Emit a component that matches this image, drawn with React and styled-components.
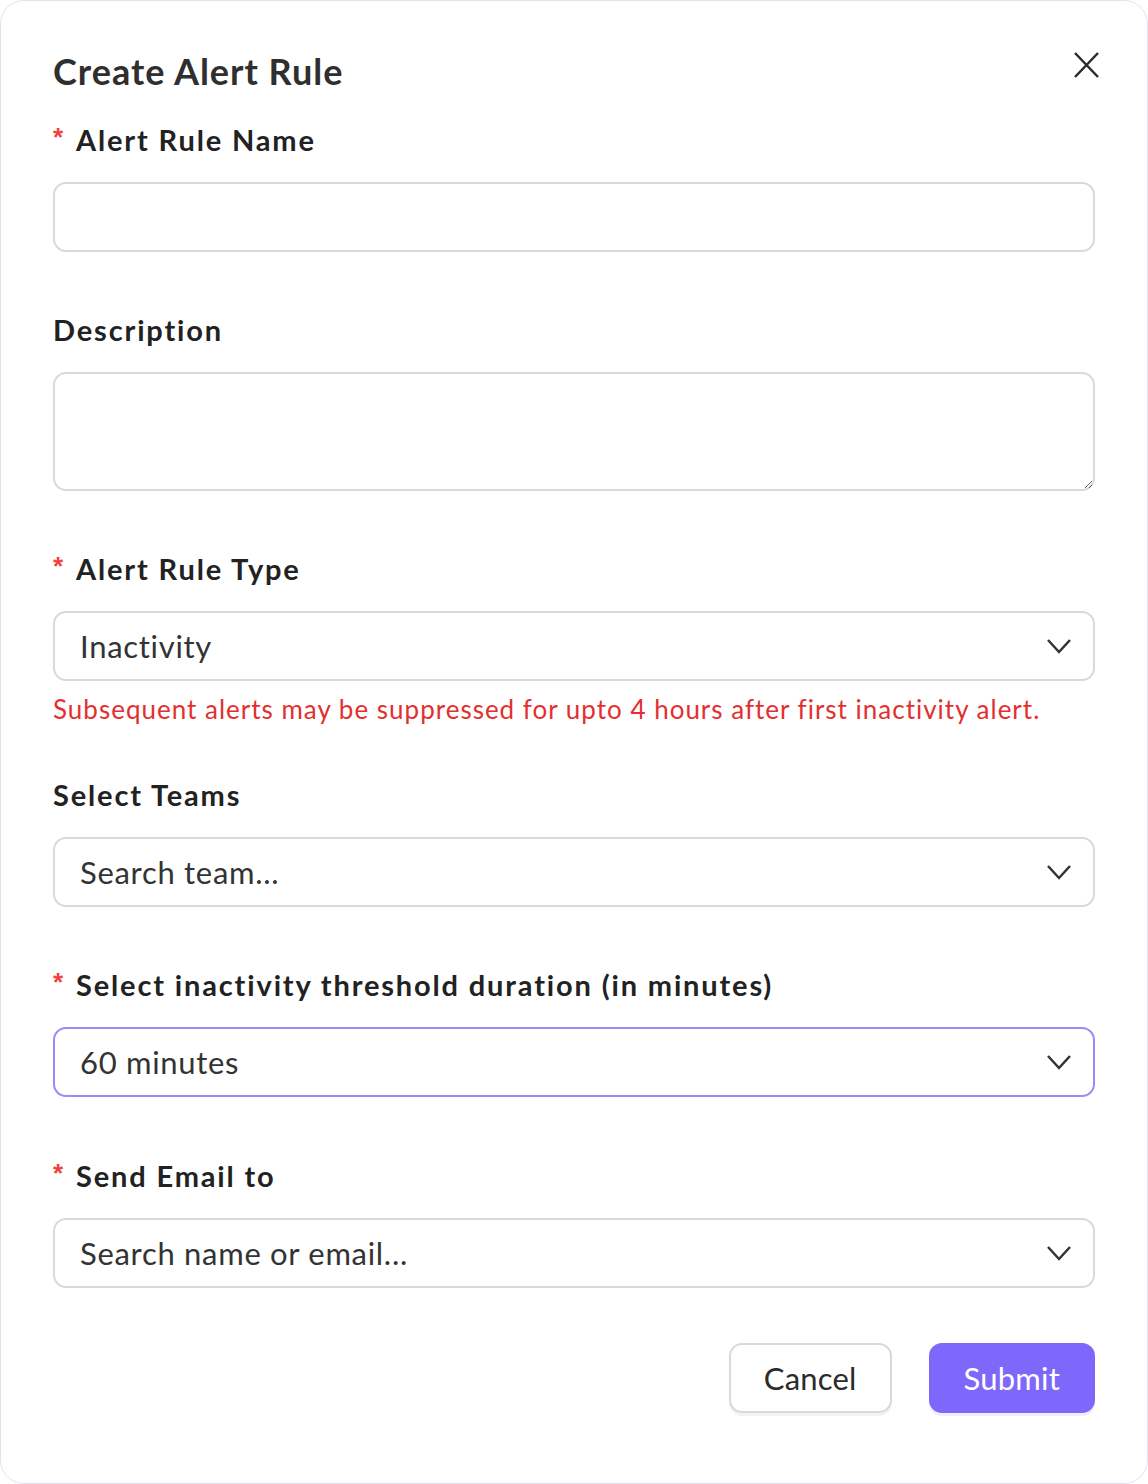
import React from "react";
import styled, { createGlobalStyle } from "styled-components";

const GlobalStyle = createGlobalStyle`
  html, body {
    margin: 0;
    padding: 0;
    background: #ffffff;
    font-family: Lato, "Open Sans", sans-serif;
  }
  * {
    box-sizing: border-box;
  }
`;

const Card = styled.div`
  width: 1148px;
  height: 1484px;
  border: 1px solid #e4e2f2;
  border-radius: 24px;
  background: #fff;
  padding: 46px 52px 0 52px;
  display: flex;
  flex-direction: column;
`;

const Header = styled.div`
  display: flex;
  justify-content: space-between;
  align-items: flex-start;
`;

const Title = styled.h2`
  margin: 0;
  font-size: 36px;
  line-height: 48px;
  font-weight: 700;
  color: #2f2f2f;
  letter-spacing: 1px;
`;

const CloseButton = styled.button`
  border: none;
  background: none;
  padding: 0;
  margin: 1px -8px 0 0;
  width: 34px;
  height: 34px;
  display: flex;
  align-items: center;
  justify-content: center;
  cursor: pointer;
  color: #2b2b2b;
`;

const Field = styled.div`
  display: flex;
  flex-direction: column;
  margin-top: ${props => props.top || 58}px;
`;

const Label = styled.label`
  display: flex;
  align-items: center;
  font-size: 29px;
  line-height: 40px;
  font-weight: 700;
  color: #222;
  letter-spacing: 1.85px;
  margin-bottom: 22px;
`;

const Star = styled.span`
  color: #f0433f;
  font-size: 26px;
  width: 23px;
  margin-top: -6px;
  letter-spacing: 0;
  font-family: "Liberation Sans", sans-serif;
`;

const TextInput = styled.input`
  width: 100%;
  height: 70px;
  border: 2px solid #d9d9d9;
  border-radius: 13px;
  padding: 0 25px;
  font: inherit;
  font-size: 30px;
  outline: none;
`;

const TextArea = styled.textarea`
  width: 100%;
  height: 119px;
  border: 2px solid #d9d9d9;
  border-radius: 13px;
  padding: 14px 25px;
  font: inherit;
  font-size: 30px;
  outline: none;
  resize: vertical;
  display: block;
`;

const Select = styled.div`
  width: 100%;
  height: 70px;
  border: 2px solid ${props => (props.active ? "#9b8af8" : "#d9d9d9")};
  border-radius: 13px;
  padding: 0 21px 0 25px;
  display: flex;
  align-items: center;
  justify-content: space-between;
  font-size: 31px;
  color: #333;
  letter-spacing: 0.7px;
`;

const Hint = styled.div`
  margin-top: 10px;
  font-size: 26px;
  line-height: 36px;
  color: #e2302f;
  letter-spacing: 1px;
`;

const Footer = styled.div`
  display: flex;
  justify-content: flex-end;
  gap: 37px;
  margin-top: 55px;
`;

const Button = styled.button`
  height: 70px;
  padding: 0 33px;
  border-radius: 13px;
  font: inherit;
  font-size: 31px;
  letter-spacing: 0.2px;
  cursor: pointer;
  border: 2px solid ${props => (props.primary ? "#7d68fb" : "#d9d9d9")};
  background: ${props => (props.primary ? "#7d68fb" : "#fff")};
  color: ${props => (props.primary ? "#fff" : "#2b2b2b")};
  box-shadow: 0 3px 0 ${props => (props.primary ? "#efedff" : "#f3f3f3")};
`;

const Chevron = () => (
  <svg width="26" height="16" viewBox="0 0 26 16" fill="none">
    <path d="M2 2l11 12L24 2" stroke="#333" strokeWidth="2.5" />
  </svg>
);

const CloseIcon = () => (
  <svg width="28" height="28" viewBox="0 0 28 28" fill="none">
    <path d="M3 2l23 24M26 2L3 26" stroke="#2b2b2b" strokeWidth="2.5" />
  </svg>
);

function SelectField({ label, required, value, active, top, children }) {
  return (
    <Field top={top}>
      <Label>
        {required ? <Star>*</Star> : null}
        {label}
      </Label>
      <Select active={active}>
        <span>{value}</span>
        <Chevron />
      </Select>
      {children}
    </Field>
  );
}

export default function App() {
  return (
    <>
      <GlobalStyle />
      <Card>
        <Header>
          <Title>Create Alert Rule</Title>
          <CloseButton aria-label="Close">
            <CloseIcon />
          </CloseButton>
        </Header>

        <Field top={25}>
          <Label>
            <Star>*</Star>
            Alert Rule Name
          </Label>
          <TextInput />
        </Field>

        <Field>
          <Label>Description</Label>
          <TextArea />
        </Field>

        <SelectField label="Alert Rule Type" required value="Inactivity">
          <Hint>
            Subsequent alerts may be suppressed for upto 4 hours after first
            inactivity alert.
          </Hint>
        </SelectField>

        <SelectField label="Select Teams" value="Search team..." top={48} />

        <SelectField
          label="Select inactivity threshold duration (in minutes)"
          required
          active
          value="60 minutes"
        />

        <SelectField
          label="Send Email to"
          required
          value="Search name or email..."
          top={59}
        />

        <Footer>
          <Button>Cancel</Button>
          <Button primary>Submit</Button>
        </Footer>
      </Card>
    </>
  );
}
